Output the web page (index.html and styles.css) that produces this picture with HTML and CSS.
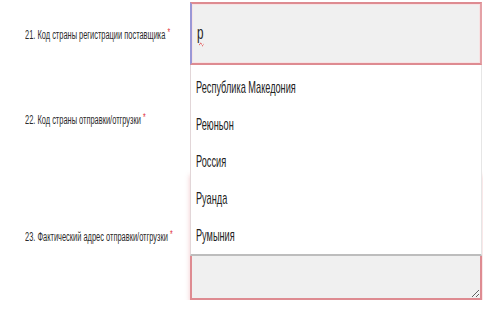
FILE: index.html
```html
<!DOCTYPE html>
<html lang="ru">
<head>
    <meta charset="UTF-8">
    <title>Сведения о поставщике</title>
    <link rel="stylesheet" href="styles.css">
</head>
<body>
    <form class="form">
        <!-- 21 -->
        <div class="row row-input">
            <label class="label"><span class="squeeze">21. Код страны регистрации поставщика <b class="req">*</b></span></label>
            <div class="field">
                <div class="text-input focused"><span class="squeeze typed">р</span></div>
                <ul class="suggest">
                    <li><span class="squeeze">Республика Македония</span></li>
                    <li><span class="squeeze">Реюньон</span></li>
                    <li><span class="squeeze">Россия</span></li>
                    <li><span class="squeeze">Руанда</span></li>
                    <li><span class="squeeze">Румыния</span></li>
                </ul>
            </div>
        </div>

        <!-- 22 -->
        <div class="row row-input">
            <label class="label"><span class="squeeze">22. Код страны отправки/отгрузки <b class="req">*</b></span></label>
            <div class="field">
                <div class="text-input"></div>
            </div>
        </div>

        <!-- 23 -->
        <div class="row row-area">
            <label class="label"><span class="squeeze">23. Фактический адрес отправки/отгрузки <b class="req">*</b></span></label>
            <div class="field">
                <textarea class="text-area"></textarea>
            </div>
        </div>
    </form>
</body>
</html>
```

FILE: styles.css
```css
body {
    margin: 0;
    padding: 0;
    background-color: #fff;
    font-family: "Liberation Sans", Arial, sans-serif;
    color: #333;
    overflow: hidden;
}
.form {
    padding-top: 2px;
    display: flex;
    flex-direction: column;
    gap: 22px;
}
.row {
    display: grid;
    grid-template-columns: 190px 292px;
    align-items: center;
}
.row-input {
    height: 63px;
}
.row-area {
    height: 128px;
}
.label {
    padding-left: 25px;
    font-size: 12px;
    color: #2b2b2b;
    white-space: nowrap;
}
.label .squeeze {
    transform: scaleX(0.62);
}
/* the screenshot is squeezed horizontally */
.squeeze {
    display: inline-block;
    transform-origin: left center;
    white-space: nowrap;
}
.req {
    color: #e0303a;
    font-weight: normal;
    font-size: 11px;
    vertical-align: 3px;
}
.field {
    position: relative;
    height: 100%;
}
.text-input {
    box-sizing: border-box;
    height: 100%;
    background-color: #f0f0f0;
    border: 2px solid #e4a1a6;
    border-color: #de8b91 #e4a1a6 #de8b91 #9a97d6;
    box-shadow: inset 0 0 0 1px #f7e3e4;
    padding-left: 5px;
    display: flex;
    align-items: center;
}
.typed {
    font-size: 18px;
    color: #222;
    transform: scaleX(0.65);
    text-decoration: underline wavy #e03030;
    text-decoration-thickness: 1px;
    text-underline-offset: 3px;
}
.suggest {
    position: absolute;
    top: 100%;
    left: 0;
    right: 0;
    z-index: 2;
    margin: 0;
    padding: 4px 0 0;
    list-style: none;
    background-color: #fff;
    border-left: 1px solid #e2d6d8;
    border-right: 1px solid #e6e6e6;
    border-bottom: 2px solid #bdbdbd;
}
.suggest li {
    height: 37px;
    line-height: 37px;
    padding-left: 5px;
    font-size: 17px;
    color: #222;
}
.suggest .squeeze {
    transform: scaleX(0.54);
}
.text-area {
    display: block;
    box-sizing: border-box;
    width: 100%;
    height: 100%;
    margin: 0;
    background-color: #f0f0f0;
    border: 2px solid #de8b91;
    border-radius: 0;
    box-shadow: 0 3px 5px rgba(220, 120, 125, 0.4);
    resize: both;
}
```
